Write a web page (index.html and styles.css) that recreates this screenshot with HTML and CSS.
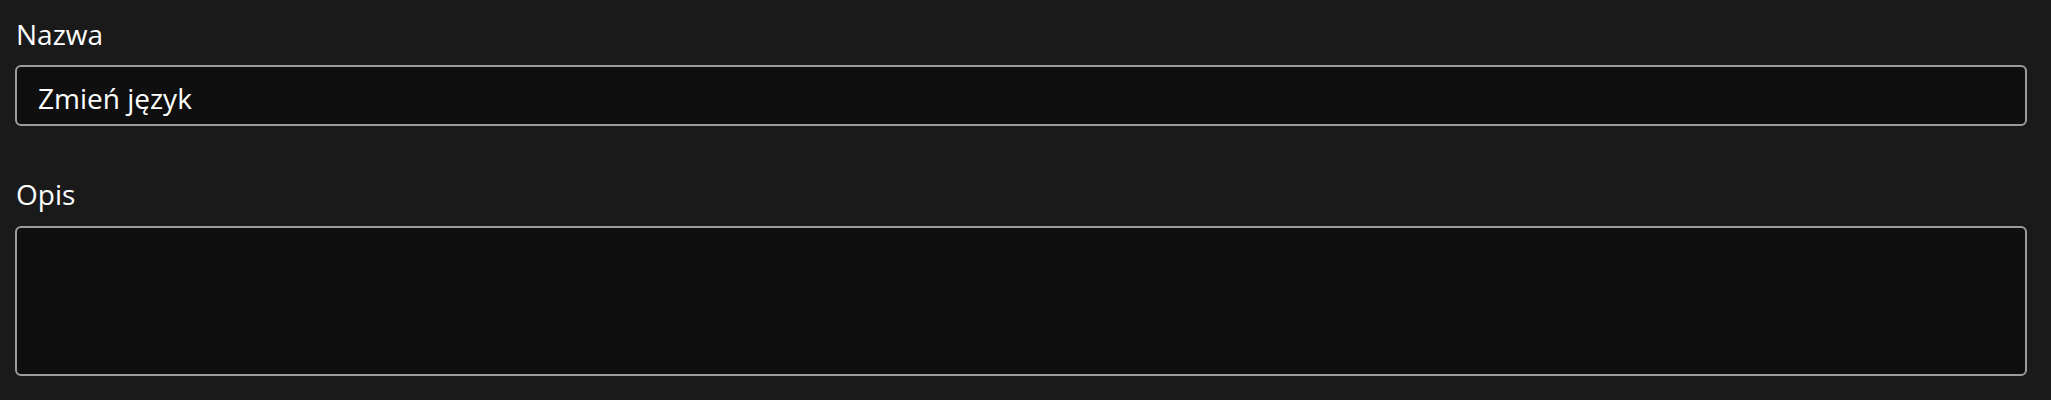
FILE: index.html
```html
<!DOCTYPE html>
<html lang="pl">
<head>
<meta charset="utf-8">
<title>Edytuj</title>
<link rel="stylesheet" href="styles.css">
</head>
<body>
<form class="form">
  <div class="field">
    <label class="label" for="name">Nazwa</label>
    <input class="input" id="name" type="text" value="Zmień język">
  </div>
  <div class="field field-desc">
    <label class="label" for="desc">Opis</label>
    <textarea class="textarea" id="desc"></textarea>
  </div>
</form>
</body>
</html>
```
FILE: styles.css
```css
html, body {
  margin: 0;
  background: #1a1a1a;
  height: 100%;
}
.form {
  display: flex;
  flex-direction: column;
  padding: 16px 24px 0 15px;
  font-family: "Open Sans", "Noto Sans", sans-serif;
}
.field {
  display: flex;
  flex-direction: column;
}
.field-desc {
  margin-top: 50px;
}
.label {
  font-size: 28px;
  line-height: 36px;
  color: #ffffff;
  margin-bottom: 13px;
  padding-left: 1px;
}
.field-desc .label {
  margin-bottom: 14px;
}
.input,
.textarea {
  box-sizing: border-box;
  width: 100%;
  margin: 0;
  background: #0f0f0f;
  border: 2px solid #9c9c9c;
  border-radius: 6px;
  color: #ffffff;
  font-family: inherit;
  font-size: 28px;
  outline: none;
}
.input {
  height: 61px;
  padding: 4px 20px 0 21px;
}
.textarea {
  height: 150px;
  resize: none;
  padding: 10px 20px;
}
```
